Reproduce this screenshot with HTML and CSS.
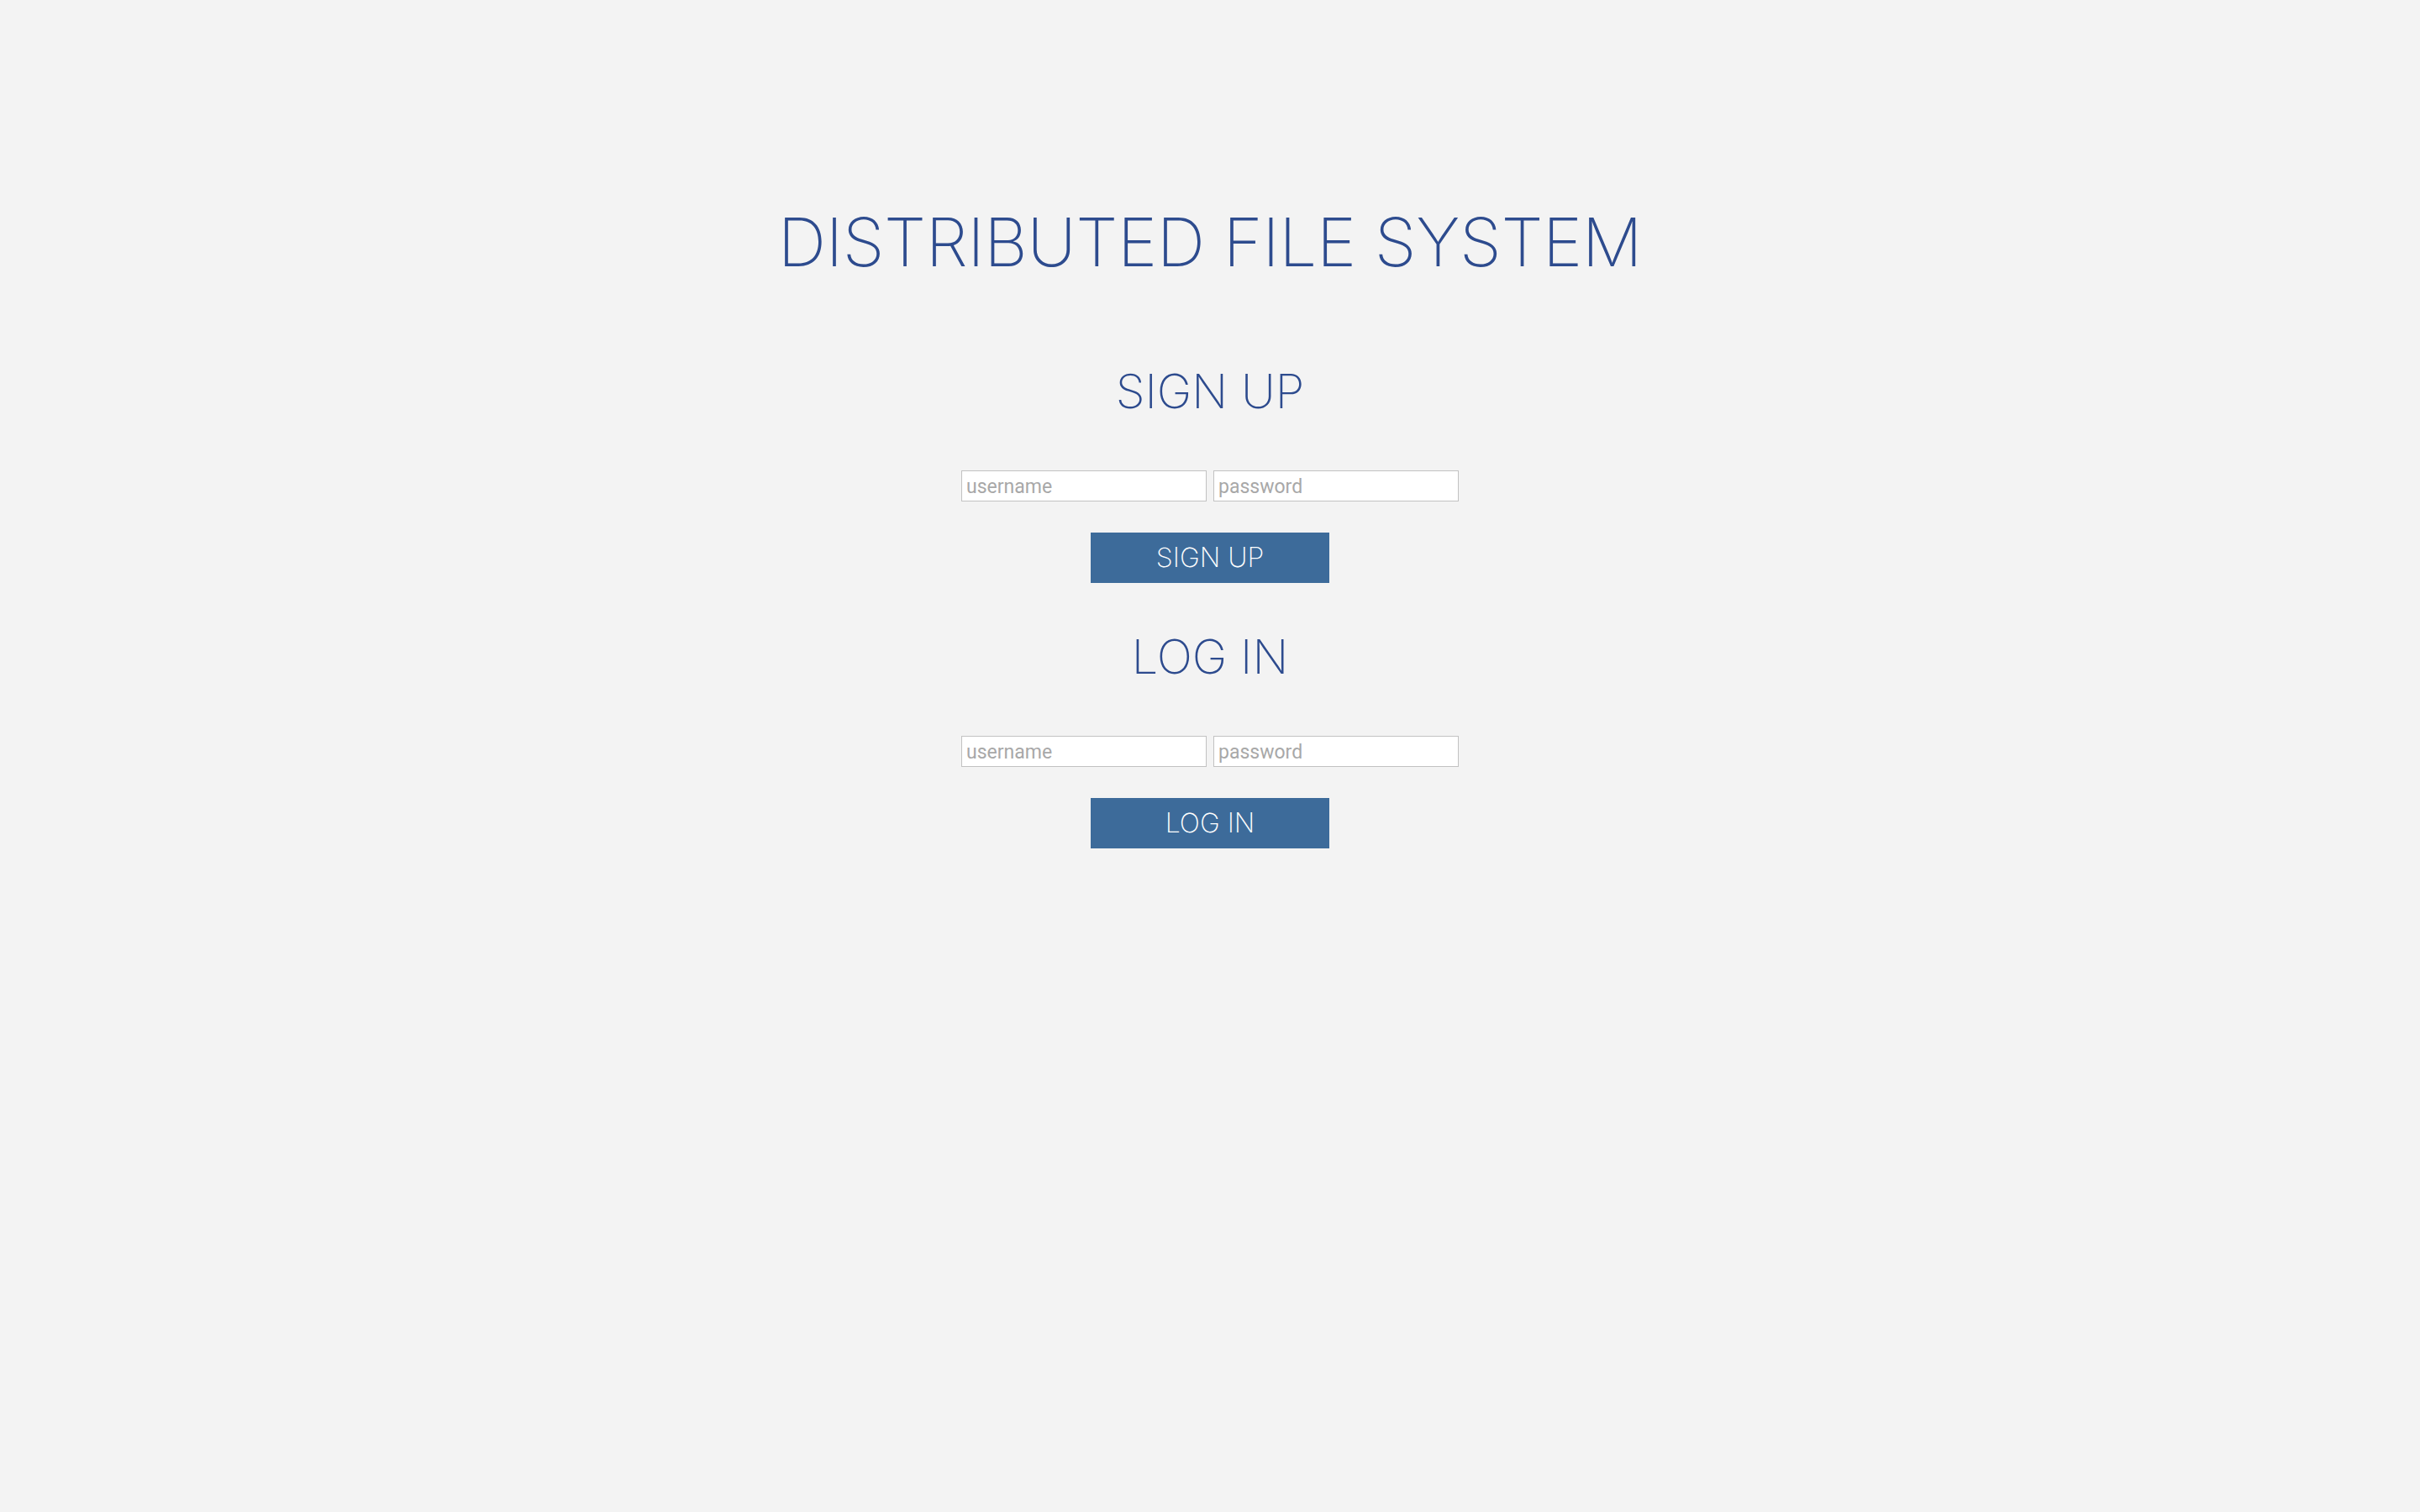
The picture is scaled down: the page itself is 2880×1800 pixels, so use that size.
FILE: index.html
```html
<!DOCTYPE html>
<html lang="en">
<head>
<meta charset="utf-8">
<title>Distributed File System</title>
<link rel="stylesheet" href="styles.css">
</head>
<body>
<main class="page">
  <h1 class="title">DISTRIBUTED FILE SYSTEM</h1>
  <section class="auth auth-signup">
    <h2 class="auth-heading">SIGN UP</h2>
    <form class="auth-form">
      <div class="auth-fields">
        <input class="auth-input" type="text" placeholder="username">
        <input class="auth-input" type="password" placeholder="password">
      </div>
      <button class="auth-button" type="button">SIGN UP</button>
    </form>
  </section>
  <section class="auth auth-login">
    <h2 class="auth-heading">LOG IN</h2>
    <form class="auth-form">
      <div class="auth-fields">
        <input class="auth-input" type="text" placeholder="username">
        <input class="auth-input" type="password" placeholder="password">
      </div>
      <button class="auth-button" type="button">LOG IN</button>
    </form>
  </section>
</main>
</body>
</html>
```
FILE: styles.css
```css
html, body {
  margin: 0;
  padding: 0;
  background: #f3f3f3;
  font-family: "Inter", "Lato", sans-serif;
}

.page {
  display: flex;
  flex-direction: column;
  align-items: center;
  padding-top: 248px;
}

.title {
  margin: 0;
  font-size: 80px;
  line-height: 1;
  font-weight: 200;
  color: #2d4b8e;
  letter-spacing: -0.4px;
}

.auth {
  display: flex;
  flex-direction: column;
  align-items: center;
}

.auth-signup {
  margin-top: 110px;
}

.auth-login {
  margin-top: 60px;
}

.auth-heading {
  margin: 0;
  font-size: 56px;
  line-height: 1;
  font-weight: 200;
  color: #2d4b8e;
}

.auth-form {
  display: flex;
  flex-direction: column;
  align-items: center;
  gap: 37px;
  margin-top: 66px;
}

.auth-fields {
  display: flex;
  gap: 8px;
}

.auth-input {
  box-sizing: border-box;
  width: 292px;
  height: 37px;
  margin: 0;
  padding: 2px 5px 0;
  border: 1px solid #c2c2c2;
  border-radius: 0;
  background: #ffffff;
  font-family: "Roboto", "Inter", sans-serif;
  font-size: 23px;
  color: #333;
  outline: none;
}

.auth-input::placeholder {
  color: #a8a8a8;
}

.auth-button {
  box-sizing: border-box;
  width: 284px;
  height: 60px;
  margin: 0;
  padding: 0;
  border: none;
  border-radius: 0;
  background: #3d6b9a;
  color: #ffffff;
  font-family: "Inter", "Lato", sans-serif;
  font-size: 32px;
  font-weight: 200;
  line-height: 1;
  cursor: pointer;
}
```
